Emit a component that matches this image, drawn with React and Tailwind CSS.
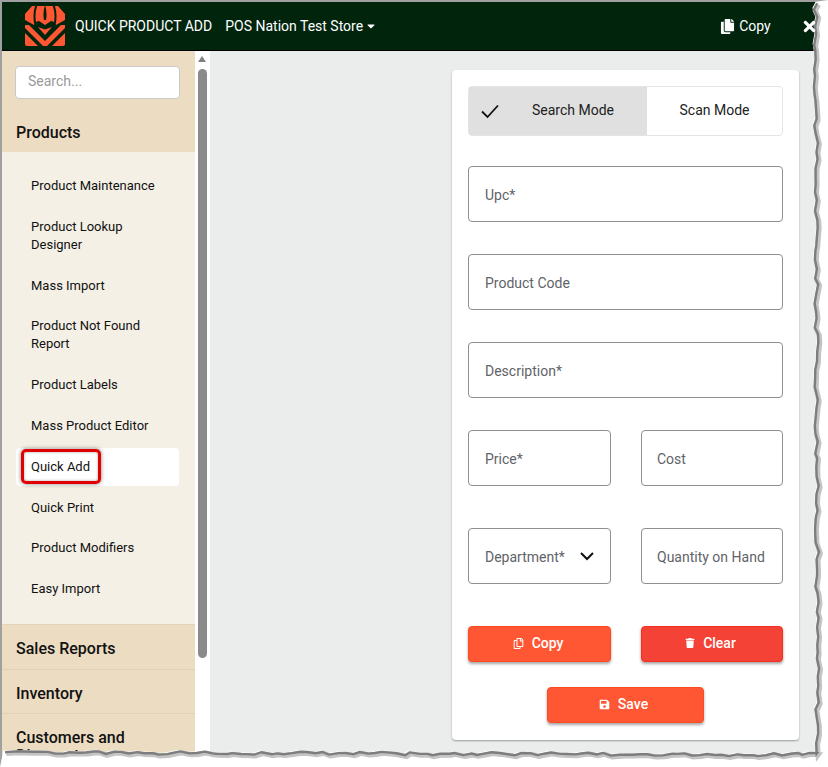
import React from "react";
import { FaCopy, FaRegCopy, FaTimes, FaTrash, FaSave, FaCaretDown } from "react-icons/fa";

function jag(a, b, steps, amp, seed) {
  let s = seed;
  const r = () => {
    s = (s * 9301 + 49297) % 233280;
    return s / 233280 - 0.5;
  };
  const out = [];
  for (let i = 0; i <= steps; i++) {
    const t = i / steps;
    out.push([a[0] + (b[0] - a[0]) * t + r() * amp, a[1] + (b[1] - a[1]) * t + r() * amp]);
  }
  return out;
}
const edge = [...jag([814, 0], [816, 750], 90, 4, 17), ...jag([817, 753], [2, 751], 110, 3.4, 71)];
const line = edge.map((p) => p[0].toFixed(1) + "," + p[1].toFixed(1)).join(" ");
const outside = `${line} 0,767 828,767 828,0`;

function TornEdge() {
  return (
    <svg className="absolute left-0 top-0" width="828" height="767" viewBox="0 0 828 767">
      <polygon points={outside} fill="#ffffff" />
      <polyline points={line} fill="none" stroke="#c4c4c4" strokeWidth="5" transform="translate(3 3)" />
      <polyline points={line} fill="none" stroke="#7d7d7d" strokeWidth="2.4" transform="translate(1.6 1.6)" />
    </svg>
  );
}

function Logo() {
  return (
    <svg width="40" height="40" viewBox="0 0 40 40">
      <path d="M7 0 H33 L40 8 V14 L31 19 Q29 15 26 15 L20 19 L14 15 Q11 15 9 19 L0 14 V8 Z" fill="#ff5733" />
      <path d="M11.5 -1 Q8 8 10.5 19 M28.5 -1 Q32 8 29.5 19" fill="none" stroke="#01240d" strokeWidth="2" />
      <path d="M20 -1 Q17.5 7 19 14 H21 Q22.5 7 20 -1 Z" fill="#01240d" />
      <path d="M13 21 L20 23.5 L27 21 L20 29 Z" fill="#ff5733" />
      <path d="M0 19 L4 19 L20 35 L36 19 L40 19 L40 22 L22 40 H18 L0 22 Z" fill="#ff5733" />
      <path d="M0 27 L13 40 H2 Q0 40 0 38 Z" fill="#ff5733" />
      <path d="M40 27 L27 40 H38 Q40 40 40 38 Z" fill="#ff5733" />
    </svg>
  );
}

const items = [
  "Product Maintenance",
  "Product Lookup Designer",
  "Mass Import",
  "Product Not Found Report",
  "Product Labels",
  "Mass Product Editor",
  "Quick Add",
  "Quick Print",
  "Product Modifiers",
  "Easy Import",
];

function Field({ label, className = "", right }) {
  return (
    <div className={`h-[56px] rounded border border-[#8f8f8f] bg-white flex items-center justify-between text-[14px] text-[#5f6368] ${className}`}>
      <span className="whitespace-nowrap pt-[2px]">{label}</span>
      {right}
    </div>
  );
}

function ActionButton({ icon, label, className }) {
  return (
    <button className={`h-[36px] rounded border flex items-center justify-center gap-[8px] text-white text-[14px] font-medium pb-[2px] pr-[3px] shadow-[0_2px_3px_rgba(0,0,0,0.35)] ${className}`}>
      {icon}
      {label}
    </button>
  );
}

export default function App() {
  return (
    <div className="relative w-[828px] h-[767px] overflow-hidden bg-white font-['Roboto',sans-serif]">
      <div className="w-[828px] h-[767px] border-l-2 border-t-2 border-[#a0a0a0] flex flex-col">
        <header className="h-[49px] shrink-0 bg-[#01240d] border-b border-black flex items-center text-white text-[14px] pl-[23px]">
          <Logo />
          <span className="ml-[10px] whitespace-nowrap">QUICK PRODUCT ADD</span>
          <span className="ml-[13px] whitespace-nowrap">POS Nation Test Store</span>
          <FaCaretDown className="ml-[2px] text-[12px]" />
          <div className="ml-[343px] flex items-center gap-[4px]">
            <FaCopy className="text-[15px]" />
            <span>Copy</span>
          </div>
          <FaTimes className="ml-[30px] text-[17px] relative z-10" />
        </header>
        <div className="flex flex-1 min-h-0">
          <aside className="w-[193px] shrink-0 bg-[#ecdcc2] overflow-hidden">
            <div className="pt-[15px] px-[13px]">
              <div className="h-[33px] w-[165px] rounded border border-[#c9c9c9] bg-white flex items-center pl-[12px] pb-[2px] text-[14px] text-[#9a9a9a]">
                Search...
              </div>
            </div>
            <div className="h-[53px] flex items-center pl-[14px] pt-[15px] text-[16px] font-medium text-[#111]">Products</div>
            <div className="bg-[#f5f0e6] h-[473px] pl-[14px] pr-[16px] pt-[15px] flex flex-col gap-[2.8px] border-b border-[#e2d5bd]">
              {items.map((t) => (
                <div
                  key={t}
                  className={`relative pl-[15px] pr-[15px] py-[10px] text-[13px] leading-[18px] text-[#111] rounded ${t === "Quick Add" ? "bg-white" : ""}`}
                >
                  {t}
                  {t === "Quick Add" && (
                    <div className="absolute left-[5px] top-[1px] w-[80px] h-[35px] rounded-[5px] border-[3px] border-[#e00000] shadow-[0_0_4px_rgba(0,0,0,0.5),inset_0_0_3px_rgba(0,0,0,0.35)]" />
                  )}
                </div>
              ))}
            </div>
            <div className="h-[45px] flex items-center pl-[14px] pt-[3px] text-[16px] font-medium text-[#111] border-b border-[#e0d0b5]">Sales Reports</div>
            <div className="h-[44px] flex items-center pl-[14px] pt-[4px] text-[16px] font-medium text-[#111] border-b border-[#e0d0b5]">Inventory</div>
            <div className="pl-[14px] pt-[15px] w-[150px] text-[16px] leading-[18px] font-medium text-[#111]">Customers and Discounts</div>
          </aside>
          <div className="w-[15px] shrink-0 bg-white relative">
            <div className="absolute left-[3px] top-[5px] w-0 h-0 border-x-[4.5px] border-x-transparent border-b-[6px] border-b-[#808080]" />
            <div className="absolute left-[3px] top-[18px] w-[9px] h-[589px] rounded-full bg-[#8a8a8a]" />
          </div>
          <main className="flex-1 bg-[#ebedec] pl-[242px] pt-[19px]">
            <div className="w-[347px] h-[670px] bg-white rounded shadow-[0_1px_2px_rgba(0,0,0,0.35)] p-[16px] flex flex-col">
              <div className="h-[50px] w-[315px] flex rounded border border-[#e4e4e4] text-[14px] text-[#222] shrink-0">
                <div className="w-[178px] bg-[#e0e0e0] relative flex items-center justify-center pl-[30px] pb-[2px]">
                  <svg className="absolute left-[12px] top-[16px]" width="18" height="16" viewBox="0 0 18 16" fill="none" stroke="#111" strokeWidth="1.8">
                    <path d="M1 8.5 L6.5 14 L17 2.5" />
                  </svg>
                  Search Mode
                </div>
                <div className="flex-1 flex items-center justify-center pb-[2px]">Scan Mode</div>
              </div>
              <Field label="Upc*" className="mt-[30px] pl-[16px]" />
              <Field label="Product Code" className="mt-[32px] pl-[16px]" />
              <Field label="Description*" className="mt-[32px] pl-[16px]" />
              <div className="mt-[32px] flex justify-between">
                <Field label="Price*" className="w-[143px] pl-[16px]" />
                <Field label="Cost" className="w-[142px] pl-[15px]" />
              </div>
              <div className="mt-[42px] flex justify-between">
                <Field
                  label="Department*"
                  className="w-[143px] pl-[16px] pr-[16px]"
                  right={
                    <svg width="14" height="9" viewBox="0 0 14 9" fill="none" stroke="#111" strokeWidth="2">
                      <path d="M1 1 L7 7 L13 1" />
                    </svg>
                  }
                />
                <Field label="Quantity on Hand" className="w-[142px] pl-[15px]" />
              </div>
              <div className="mt-[42px] flex justify-between">
                <ActionButton icon={<FaRegCopy className="text-[11px]" />} label="Copy" className="w-[143px] bg-[#ff5733] border-[#ff4a1f]" />
                <ActionButton icon={<FaTrash className="text-[10px]" />} label="Clear" className="w-[142px] bg-[#f44336] border-[#f33020]" />
              </div>
              <div className="mt-[25px] flex justify-center pr-[1px]">
                <ActionButton icon={<FaSave className="text-[11px]" />} label="Save" className="w-[157px] bg-[#ff5733] border-[#ff4a1f]" />
              </div>
            </div>
          </main>
        </div>
      </div>
      <TornEdge />
    </div>
  );
}
